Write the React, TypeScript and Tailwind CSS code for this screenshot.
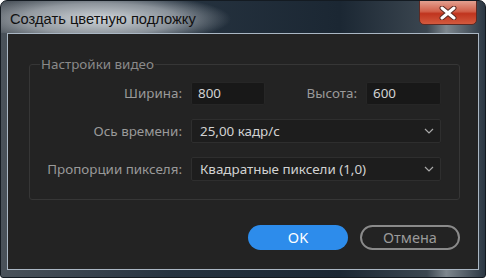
import React from "react";

function Chevron() {
  return (
    <svg width="10" height="6" viewBox="0 0 10 6" className="shrink-0">
      <polyline points="1,1 5,5 9,1" fill="none" stroke="#a8a8a8" strokeWidth="1.2" />
    </svg>
  );
}

function CloseGlyph() {
  return (
    <svg width="18" height="14" viewBox="0 0 18 14">
      <path d="M3 2 L15 12 M15 2 L3 12" stroke="#5a2a22" strokeWidth="5" strokeLinecap="round" />
      <path d="M3 2 L15 12 M15 2 L3 12" stroke="#ffffff" strokeWidth="3" strokeLinecap="round" />
    </svg>
  );
}

export default function App() {
  const content = "font-['Noto_Sans',sans-serif]";
  const label = "w-[161px] pr-[9px] text-right text-[13.4px] text-[#9a9a9a] whitespace-nowrap";
  return (
    <div
      className="w-[486px] h-[278px] flex flex-col border border-[#141b22] rounded-t-[7px] rounded-b-[3px] overflow-hidden bg-[linear-gradient(90deg,#4a525a_0%,#263340_35%,#1b2733_70%,#3b4650_88%,#7e878e_92%,#2a3642_100%)]"
    >
      <div className="h-[32px] flex items-start justify-between pl-[9px] pr-[8px] bg-[radial-gradient(ellipse_130px_26px_at_100px_18px,rgba(215,220,224,0.95),rgba(200,205,210,0.6)_60%,rgba(0,0,0,0)_100%)]">
        <div className="pt-[8px] text-[14.7px] leading-[20px] text-[#111] font-['Liberation_Sans',sans-serif]">
          Создать цветную подложку
        </div>
        <div className="w-[58px] h-[25px] -mt-px flex items-center justify-center rounded-b-[5px] border border-[#5b2a24] bg-[linear-gradient(180deg,#e3a090_0%,#d1604a_45%,#c0341e_55%,#d35a3e_100%)]">
          <CloseGlyph />
        </div>
      </div>
      <div className="flex-1 mx-[6px] mb-[7px] border border-[#aab7c4] bg-[#232323] flex flex-col">
        <fieldset
          className={`mt-[21px] ml-[21px] mr-[18px] border border-[#363636] rounded-[3px] pr-[18px] pb-[18px] pt-[9px] ${content}`}
        >
          <legend className="ml-[10px] px-[1px] text-[13.4px] leading-[18px] text-[#8a8a8a]">
            Настройки видео
          </legend>
          <div className="flex flex-col gap-[14px]">
            <div className="flex items-center h-[23px]">
              <div className={label}>Ширина:</div>
              <div className="w-[74px] h-[23px] bg-[#181818] border border-[#262626] rounded-[2px] pl-[6px] flex items-center text-[13.4px] text-[#d2d2d2]">
                800
              </div>
              <div className="flex-1 pr-[9px] text-right text-[13.4px] text-[#9a9a9a]">Высота:</div>
              <div className="w-[75px] h-[23px] bg-[#181818] border border-[#262626] rounded-[2px] pl-[6px] flex items-center text-[13.4px] text-[#d2d2d2]">
                600
              </div>
            </div>
            <div className="flex items-center h-[24px]">
              <div className={label}>Ось времени:</div>
              <div className="flex-1 h-[24px] bg-[#1d1d1d] border border-[#2e2e2e] rounded-[2px] pl-[8px] pr-[6px] flex items-center justify-between text-[13.4px] text-[#d2d2d2]">
                <span>25,00 кадр/с</span>
                <Chevron />
              </div>
            </div>
            <div className="flex items-center h-[24px]">
              <div className={label}>Пропорции пикселя:</div>
              <div className="flex-1 h-[24px] bg-[#1d1d1d] border border-[#2e2e2e] rounded-[2px] pl-[8px] pr-[6px] flex items-center justify-between text-[13.4px] text-[#d2d2d2]">
                <span>Квадратные пиксели (1,0)</span>
                <Chevron />
              </div>
            </div>
          </div>
        </fieldset>
        <div className={`mt-[25px] mr-[18px] flex justify-end gap-[12px] ${content}`}>
          <div className="w-[100px] h-[25px] rounded-full bg-[#2d8ceb] flex items-center justify-center text-[14.5px] text-white">
            OK
          </div>
          <div className="w-[100px] h-[25px] rounded-full border-2 border-[#8a8a8a] flex items-center justify-center text-[14.5px] text-[#9a9a9a]">
            Отмена
          </div>
        </div>
      </div>
    </div>
  );
}
